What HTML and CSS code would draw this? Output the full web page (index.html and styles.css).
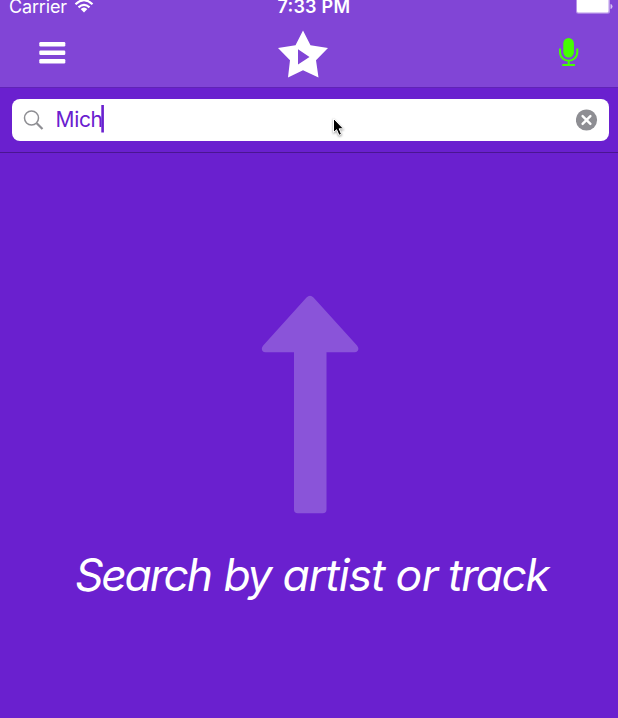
FILE: index.html
```html
<!DOCTYPE html>
<html lang="en">
<head>
<meta charset="utf-8">
<title>Search</title>
<link rel="stylesheet" href="styles.css">
</head>
<body>
<header class="navbar">
  <div class="status">
    <div class="status-left">
      <svg class="carrier-label" width="60" height="20"><text x="1" y="13" textLength="58">Carrier</text></svg>
      <svg class="wifi" width="20" height="14" viewBox="0 0 20 14" fill="none" stroke="#fff" stroke-width="2.2"><path d="M1.500 4.200Q10-3.800 18.500 4.200M4.500 7.400Q10 2.400 15.500 7.400"/><path d="M6.600 9Q10 6 13.400 9L10 12.400Z" fill="#fff" stroke="none"/></svg>
    </div>
    <svg class="clock" width="76" height="20"><text x=".5" y="13" textLength="72.500">7:33 PM</text></svg>
    <svg class="battery" width="38" height="14" viewBox="0 0 38 14"><rect x="1" y="-6" width="34" height="19.800" rx="2.500" fill="#b794e8"/><rect x="2" y="-5" width="31.500" height="17.500" rx="1.500" fill="#fff"/><path d="M35.500 4q2 .4 2 2.500t-2 2.500z" fill="#d5c0f1"/></svg>
  </div>
  <nav class="actions">
    <svg class="menu" width="28" height="24" viewBox="0 0 28 24" fill="#fff"><rect x="1.300" y="1" width="26" height="4.500" rx="1.200"/><rect x="1.300" y="9.500" width="26" height="4.500" rx="1.200"/><rect x="1.300" y="18" width="26" height="4.500" rx="1.200"/></svg>
    <svg class="logo" width="52" height="50" viewBox="277 29 52 50"><path fill="#fff" fill-rule="evenodd" d="M303 30.500L310.500 45.200 328 48 316 60.300 318.500 77.500 303 70.300 288 77.500 290 60.300 278 48 295.500 45.200ZM298 49.300V64.500L309.500 57Z"/></svg>
    <svg class="mic" width="22" height="30" viewBox="558 37 22 30" fill="none" stroke="#4f0" stroke-width="2"><rect x="563.300" y="38" width="10.600" height="19.500" rx="5.300" fill="#4f0" stroke="none"/><path d="M560 48.500V52C560 63.500 577.300 63.500 577.300 52V48.500M568.700 60.500V65M562.300 65H575"/></svg>
  </nav>
</header>
<div class="searchbar">
  <div class="field">
    <svg class="lens" width="22" height="22" viewBox="23 109 22 22" fill="none" stroke="#8e8e93"><circle cx="31.500" cy="118" r="7" stroke-width="1.500"/><path d="M36.700 123.200L42.500 129" stroke-width="2.200"/></svg>
    <svg class="query" width="53" height="30"><text x=".5" y="21.500" textLength="47.500">Mich</text><rect class="caret" x="46.300" y="0" width="2.600" height="27.500"/></svg>
    <svg class="clear" width="22" height="22" viewBox="0 0 22 22"><circle cx="10.500" cy="11" r="10.600" fill="#8e8e93"/><path d="M6.600 7.100L14.400 14.900M14.400 7.100L6.600 14.900" stroke="#fff" stroke-width="2.400" stroke-linecap="round"/></svg>
  </div>
  <svg class="pointer" width="18" height="24" viewBox="0 0 18 24"><path d="M3.500 2.500V16.500L6.600 13.700 9 19.300 11.500 18.200 9.200 12.800H13.500Z" fill="#000" stroke="#fff" stroke-width="1"/></svg>
</div>
<main class="empty">
  <svg class="arrow" width="98" height="219" viewBox="261 295 98 219"><path d="M306.500 297.500Q310 294 313.500 297.500L357 345.500Q359.500 348.500 357.500 351Q356.500 352.300 354.500 352.300H326.500V509.500Q326.500 513.300 322.700 513.300H297.800Q294 513.300 294 509.500V352.300H265.500Q263.500 352.300 262.500 351Q260.800 348.500 263.200 345.500Z" fill="#8a54d9"/></svg>
  <svg class="hint" width="490" height="64"><text y="46"><tspan x="11" textLength="138">Search</tspan> <tspan x="159.500" textLength="49">by</tspan> <tspan x="218.500" textLength="103">artist</tspan> <tspan x="331.500" textLength="43">or</tspan> <tspan x="384" textLength="102">track</tspan></text></svg>
</main>
</body>
</html>
```
FILE: styles.css
```css
* { box-sizing: border-box; }
body {
  margin: 0;
  height: 718px;
  overflow: hidden;
  background: #6a20cf;
  color: #fff;
  font-family: Inter, "Liberation Sans", sans-serif;
}
svg { display: block; flex: none; }
text { fill: currentColor; }
.navbar {
  height: 88px;
  background: #8145d6;
  border-bottom: 1px solid #6023b6;
}
.status {
  height: 20px;
  display: grid;
  grid-template-columns: 1fr 76px 1fr;
  align-items: start;
  padding: 0 5px 0 8px;
  font-size: 18px;
}
.status-left { display: flex; gap: 6px; }
.clock { font-weight: 600; margin-left: 4px; }
.battery { justify-self: end; }
.actions {
  height: 67px;
  display: grid;
  grid-template-columns: 1fr 52px 1fr;
  align-items: start;
  padding: 9px 38px 0 26px;
}
.menu { margin: 12px 0 0 12px; }
.mic { margin-top: 8px; justify-self: end; }
.searchbar {
  position: relative;
  height: 65px;
  padding: 11px 9px 0 12px;
  border-bottom: 1px solid #4a1691;
}
.field {
  height: 42px;
  display: flex;
  align-items: center;
  padding: 0 11px;
  border-radius: 8px;
  background: #fff;
}
.query {
  margin-left: 10px;
  color: #6a20cf;
  font-size: 21px;
}
.caret { fill: #6a20cf; }
.clear { margin-left: auto; }
.pointer {
  position: absolute;
  left: 330px;
  top: 28px;
  filter: drop-shadow(0 1px 1px #0006);
}
.empty {
  display: flex;
  flex-direction: column;
  align-items: center;
  padding-top: 142px;
}
.arrow { margin-left: 2px; }
.hint {
  margin-top: 31px;
  font-size: 44.5px;
  font-style: italic;
}
```
